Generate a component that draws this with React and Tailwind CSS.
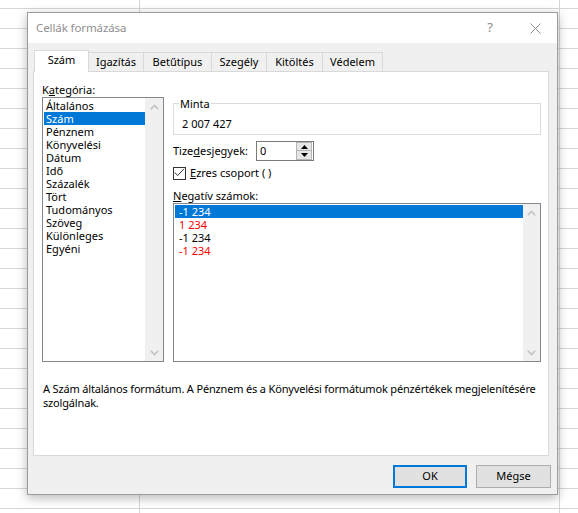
import React from "react";

const categories = [
  "Általános",
  "Szám",
  "Pénznem",
  "Könyvelési",
  "Dátum",
  "Idő",
  "Százalék",
  "Tört",
  "Tudományos",
  "Szöveg",
  "Különleges",
  "Egyéni",
];

const negatives = [
  { text: "-1 234", cls: "text-white bg-[#0078d7]" },
  { text: "1 234", cls: "text-[#ff0000]" },
  { text: "-1 234", cls: "text-black" },
  { text: "-1 234", cls: "text-[#ff0000]" },
];

const tabs = [
  { label: "Igazítás", w: "w-[55px]" },
  { label: "Betűtípus", w: "w-[68px]" },
  { label: "Szegély", w: "w-[55px]" },
  { label: "Kitöltés", w: "w-[56px]" },
  { label: "Védelem", w: "w-[60px]" },
];

const Chevron = ({ down }) => (
  <svg width="9" height="6" viewBox="0 0 9 6" className={down ? "rotate-180" : ""}>
    <path d="M0.8 5.2 L4.5 1.5 L8.2 5.2" fill="none" stroke="#c2c2c2" strokeWidth="1.6" />
  </svg>
);

const ScrollBar = ({ w }) => (
  <div className={`${w} bg-[#f0f0f0] flex flex-col justify-between`}>
    <div className="h-[17px] flex items-center justify-center">
      <Chevron />
    </div>
    <div className="h-[17px] flex items-center justify-center">
      <Chevron down />
    </div>
  </div>
);

export default function App() {
  return (
    <div className="w-[578px] h-[513px] overflow-hidden bg-white bg-[linear-gradient(to_right,transparent_139px,#d6d6d6_139px,#d6d6d6_140px,transparent_140px,transparent_559px,#d6d6d6_559px,#d6d6d6_560px,transparent_560px),repeating-linear-gradient(to_bottom,transparent_0px,transparent_8px,#d6d6d6_8px,#d6d6d6_9px,transparent_9px,transparent_20px)] pt-[12px] pl-[27px] font-['Noto_Sans',sans-serif] text-[11px] text-black">
      <div className="w-[531px] h-[483px] border border-[#9c9c9c] bg-[#f0f0f0] shadow-[0_3px_10px_rgba(0,0,0,0.28)] flex flex-col">
        {/* title bar */}
        <div className="h-[30px] bg-white flex items-center pl-[8px] pr-[16px]">
          <span className="text-[11.5px] tracking-[-0.1px] text-[#8f8f8f]">Cellák formázása</span>
          <span className="ml-auto text-[13px] text-[#8a8a8a] mr-[37px]">?</span>
          <svg width="11" height="11" viewBox="0 0 11 11">
            <path d="M0.5 0.5 L10.5 10.5 M10.5 0.5 L0.5 10.5" stroke="#8a8a8a" strokeWidth="1" />
          </svg>
        </div>

        {/* tabs */}
        <div className="pt-[7px] ml-[6px] flex items-end h-[29px] -mb-px">
          <div className="relative z-10 w-[55px] h-[22px] bg-white border-l border-t border-r border-[#d9d9d9] flex items-center justify-center pb-[2px]">
            Szám
          </div>
          {tabs.map((t) => (
            <div
              key={t.label}
              className={`${t.w} h-[20px] border-t border-r border-[#d9d9d9] flex items-center justify-center pb-[1px]`}
            >
              {t.label}
            </div>
          ))}
        </div>

        {/* panel */}
        <div className="ml-[5px] w-[516px] h-[385px] bg-white border border-[#d9d9d9] pl-[8px] pt-[10px]">
          <div className="flex">
            {/* left column */}
            <div className="w-[122px]">
              <div className="h-[15px] leading-[15px]">
                K<span className="underline">a</span>tegória:
              </div>
              <div className="h-[265px] border border-[#828790] bg-white flex">
                <div className="flex-1 pt-px pl-px">
                  {categories.map((c) => (
                    <div
                      key={c}
                      className={`h-[13px] leading-[13px] pl-[2px] ${
                        c === "Szám" ? "bg-[#0078d7] text-white" : ""
                      }`}
                    >
                      {c}
                    </div>
                  ))}
                </div>
                <ScrollBar w="w-[18px]" />
              </div>
            </div>

            {/* right column */}
            <div className="ml-[9px] w-[368px]">
              <fieldset className="mt-[14px] h-[39px] border border-[#dcdcdc]">
                <legend className="ml-[5px] px-px leading-[15px]">Minta</legend>
                <div className="pl-[8px] mt-[5px] leading-[15px]">2 007 427</div>
              </fieldset>

              <div className="mt-[6px] h-[20px] flex items-center">
                <div className="w-[83px]">
                  Tize<span className="underline">d</span>esjegyek:
                </div>
                <div className="w-[58px] h-[20px] border border-[#7a7a7a] bg-white flex items-center">
                  <span className="pl-[3px] flex-1">0</span>
                  <div className="w-[16px] h-[18px] mr-px flex flex-col">
                    <div className="h-[9px] bg-[#e6e6e6] border border-[#b5b5b5] flex items-center justify-center">
                      <svg width="7" height="4" viewBox="0 0 7 4">
                        <path d="M0 4 L3.5 0 L7 4 Z" fill="#000" />
                      </svg>
                    </div>
                    <div className="h-[9px] bg-[#e6e6e6] border border-t-0 border-[#b5b5b5] flex items-center justify-center">
                      <svg width="7" height="4" viewBox="0 0 7 4">
                        <path d="M0 0 L3.5 4 L7 0 Z" fill="#000" />
                      </svg>
                    </div>
                  </div>
                </div>
              </div>

              <div className="mt-[5px] h-[15px] flex items-center">
                <div className="w-[13px] h-[13px] border border-[#333] bg-white">
                  <svg width="11" height="11" viewBox="0 0 11 11">
                    <path d="M0.8 4.5 L3.6 7.6 L10 0.8" fill="none" stroke="#333" strokeWidth="1" />
                  </svg>
                </div>
                <span className="ml-[4px]">
                  <span className="underline">E</span>zres csoport ( )
                </span>
              </div>

              <div className="mt-[8px] h-[14px] leading-[14px]">
                <span className="underline">N</span>egatív számok:
              </div>
              <div className="h-[159px] border border-[#828790] bg-white flex">
                <div className="flex-1 pt-px pl-px">
                  {negatives.map((n, i) => (
                    <div key={i} className={`h-[13px] leading-[13px] pl-[4px] ${n.cls}`}>
                      {n.text}
                    </div>
                  ))}
                </div>
                <ScrollBar w="w-[17px]" />
              </div>
            </div>
          </div>

          <div className="mt-[20px] pl-px leading-[14px] whitespace-nowrap tracking-[-0.17px]">
            A Szám általános formátum. A Pénznem és a Könyvelési formátumok pénzértékek megjelenítésére
            <br />
            szolgálnak.
          </div>
        </div>

        {/* buttons */}
        <div className="mt-[9px] pr-[6px] flex justify-end gap-[9px]">
          <button className="w-[74px] h-[23px] border-2 border-[#0078d7] bg-[#e1e1e1] flex items-center justify-center">
            OK
          </button>
          <button className="w-[75px] h-[23px] border border-[#adadad] bg-[#e1e1e1] flex items-center justify-center">
            Mégse
          </button>
        </div>
      </div>
    </div>
  );
}
